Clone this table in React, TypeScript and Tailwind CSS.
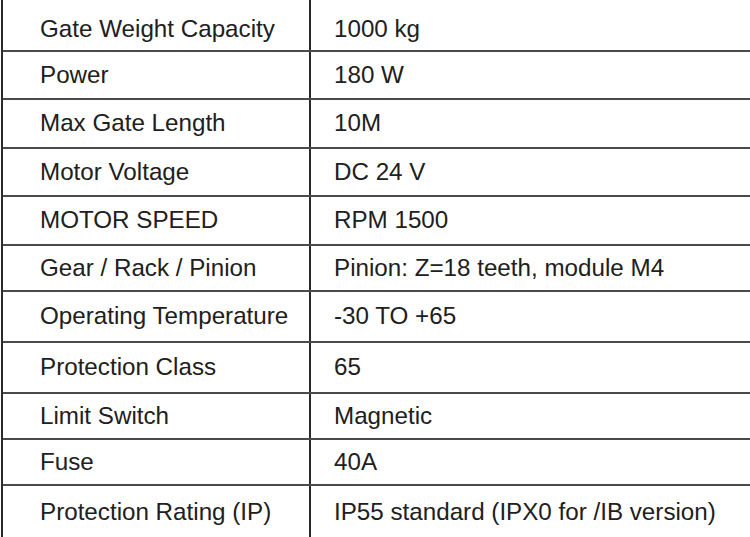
const SPECS = [
  { label: "Gate Weight Capacity", value: "1000 kg", h: "h-[52px]", pad: "pt-2" },
  { label: "Power", value: "180 W", h: "h-[48px]", pad: "" },
  { label: "Max Gate Length", value: "10M", h: "h-[49px]", pad: "" },
  { label: "Motor Voltage", value: "DC 24 V", h: "h-[48px]", pad: "" },
  { label: "MOTOR SPEED", value: "RPM 1500", h: "h-[49px]", pad: "" },
  { label: "Gear / Rack / Pinion", value: "Pinion: Z=18 teeth, module M4", h: "h-[46px]", pad: "" },
  { label: "Operating Temperature", value: "-30 TO +65", h: "h-[51px]", pad: "" },
  { label: "Protection Class", value: "65", h: "h-[51px]", pad: "" },
  { label: "Limit Switch", value: "Magnetic", h: "h-[46px]", pad: "" },
  { label: "Fuse", value: "40A", h: "h-[46px]", pad: "" },
  { label: "Protection Rating (IP)", value: "IP55 standard (IPX0 for /IB version)", h: "h-[52px]", pad: "" },
];

export default function App() {
  return (
    <div className="w-[750px] h-[537px] overflow-hidden bg-white font-['Liberation_Sans',Arial,sans-serif] text-[24.2px] text-[#202020]">
      <div className="ml-px w-[800px] border-l-2 border-[#2a2a2a]">
        {SPECS.map((row, i) => (
          <div
            key={row.label}
            className={`flex ${row.h} ${i < SPECS.length - 1 ? "border-b-2 border-[#4a4a4a]" : ""}`}
          >
            <div className={`w-[308px] shrink-0 flex items-center pl-[37px] border-r-2 border-[#2a2a2a] ${row.pad}`}>
              {row.label}
            </div>
            <div className={`flex-1 flex items-center pl-[23px] ${row.pad}`}>{row.value}</div>
          </div>
        ))}
      </div>
    </div>
  );
}
